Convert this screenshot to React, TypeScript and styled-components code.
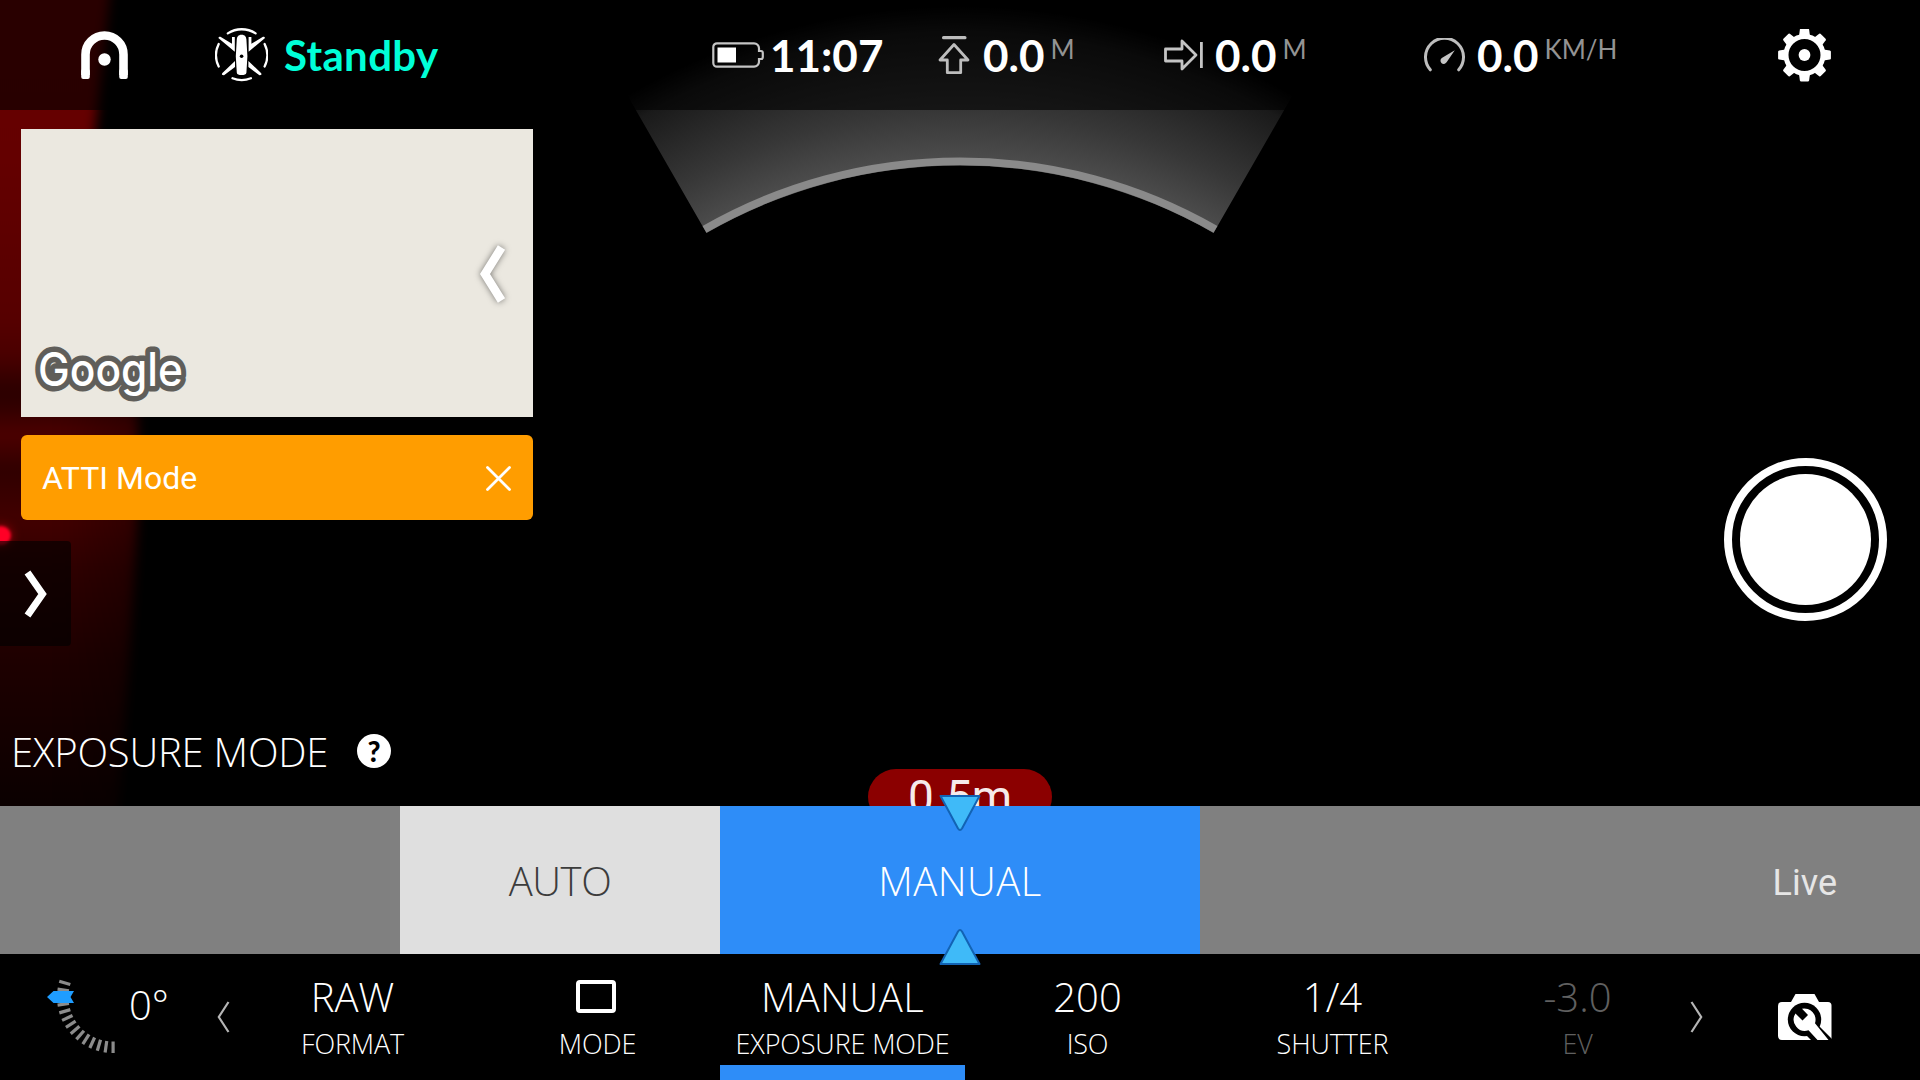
import React from "react";
import styled, { createGlobalStyle, css } from "styled-components";

const GlobalStyle = createGlobalStyle`
  *, *::before, *::after { box-sizing: border-box; }
  html, body { margin: 0; padding: 0; background: #000; }
`;

const LATO = `Lato, "Open Sans", sans-serif`;
const LIGHT = `"Open Sans", "Noto Sans", sans-serif`;
const ROBOTO = `Roboto, "Noto Sans", sans-serif`;

const Screen = styled.div`
  position: relative;
  width: 1920px;
  height: 1080px;
  overflow: hidden;
  background: #000;
  color: #fff;
  display: grid;
  grid-template-rows: 110px 696px 148px 126px;
  white-space: nowrap;
  isolation: isolate;
  svg { display: block; flex: none; }
`;

/* ---------- camera feed ---------- */
const Feed = styled.div`
  position: absolute;
  inset: 0;
  z-index: -1;
  overflow: hidden;
`;

const Glow = styled.div`
  position: absolute;
  left: -40px;
  top: -40px;
  width: 190px;
  height: 960px;
  clip-path: polygon(0 0, 154px 0, 134px 180px, 132px 340px, 178px 455px, 178px 560px, 170px 690px, 158px 860px, 100px 960px, 0 960px);
  background: linear-gradient(
    #680000 0, #640000 200px, #560000 360px, #4a0000 395px, #2c0000 430px,
    #300000 445px, #4c0000 475px, #300000 510px, #420000 560px, #300000 610px,
    #1e0000 700px, #120000 790px, #060000 880px, #030000 960px);
`;

const GlowBlur = styled.div`
  filter: blur(6px);
`;

const GlowFade = styled.div`
  position: absolute;
  left: 60px;
  top: 400px;
  width: 110px;
  height: 440px;
  background: linear-gradient(90deg, transparent, rgba(0, 0, 0, 0.3) 75%);
  filter: blur(8px);
`;

const RedLamp = styled.div`
  position: absolute;
  left: -9px;
  top: 526px;
  width: 20px;
  height: 19px;
  border-radius: 50%;
  background: #ff0026;
  box-shadow: 0 0 8px 2px rgba(180, 0, 10, 0.5);
  filter: blur(1.5px);
`;

const GimbalArc = styled.svg`
  position: absolute;
  inset: 0;
`;

/* ---------- header ---------- */
const Header = styled.header`
  display: flex;
  align-items: center;
  padding-left: 81px;
  background: rgba(0, 0, 0, 0.6);
`;

const Segment = styled.div<{ $w: number }>`
  flex: none;
  width: ${(p) => p.$w}px;
  height: 110px;
  display: flex;
  align-items: center;
`;

const Status = styled.span`
  margin-left: 16px;
  font: 700 42px ${LATO};
  letter-spacing: 0.35px;
  color: #00ffd8;
`;

const Value = styled.span<{ $gap: number }>`
  margin-left: ${(p) => p.$gap}px;
  font: 700 44px ${LATO};
`;

const Unit = styled.span`
  margin-left: 6px;
  padding-bottom: 12px;
  font: 400 26px ${LATO};
  color: #939393;
`;

/* ---------- middle ---------- */
const Middle = styled.main`
  display: flex;
  justify-content: space-between;
`;

const LeftColumn = styled.div`
  display: flex;
  flex-direction: column;
  align-items: flex-start;
  padding-top: 19px;
`;

const MapPanel = styled.div`
  width: 512px;
  height: 288px;
  margin-left: 21px;
  padding: 0 20px 10px 12px;
  background: #ebe8e0;
  display: flex;
  justify-content: space-between;
  align-items: flex-end;
`;

const MapArrow = styled.svg`
  align-self: center;
  margin-top: 11px;
  filter: drop-shadow(0 0 3px rgba(0, 0, 0, 0.5));
`;

const Alert = styled.div`
  width: 512px;
  height: 85px;
  margin: 18px 0 21px 21px;
  padding: 1px 21px 0 21px;
  border-radius: 6px;
  background: #ff9d00;
  display: flex;
  align-items: center;
  justify-content: space-between;
  font: 400 32px ${ROBOTO};
`;

const Drawer = styled.button`
  width: 71px;
  height: 105px;
  padding: 0;
  border: 0;
  border-radius: 0 4px 4px 0;
  background: rgba(0, 0, 0, 0.62);
  display: flex;
  align-items: center;
  justify-content: center;
`;

const SettingTitle = styled.div`
  display: flex;
  align-items: center;
  height: 54px;
  margin-top: 78px;
  padding-left: 11px;
  font: 300 40px ${LIGHT};
  letter-spacing: -0.2px;
`;

const TitleText = styled.span`
  width: 346px;
`;

const Help = styled.span`
  width: 34px;
  height: 34px;
  border-radius: 50%;
  background: #fff;
  color: #000;
  display: flex;
  align-items: center;
  justify-content: center;
  font: 900 28px/34px ${LATO};
`;

const ShutterRing = styled.button`
  width: 163px;
  height: 163px;
  margin: 348px 33px 0 0;
  padding: 8px;
  border: 8px solid #fff;
  border-radius: 50%;
  background: transparent;
`;

const ShutterCore = styled.span`
  display: block;
  width: 131px;
  height: 131px;
  border-radius: 50%;
  background: #fff;
`;

const DistancePill = styled.div`
  position: absolute;
  left: 868px;
  top: 769px;
  width: 184px;
  height: 56px;
  border-radius: 28px;
  background: #8b0000;
  color: #f6eaea;
  text-align: center;
  font: 400 46px/56px ${ROBOTO};
  z-index: -1;
`;

/* ---------- mode strip ---------- */
const Strip = styled.section`
  position: relative;
  display: grid;
  grid-template-columns: 400px 320px 480px 720px;
`;

const stripTone = {
  idle: css`background: #808080; color: #e6e6e6;`,
  option: css`background: #dfdfdf; color: #3c3c3c; letter-spacing: -0.4px;`,
  active: css`background: #2e8df8; color: #fff; letter-spacing: 0.5px;`,
};

const StripCell = styled.div<{ $tone: keyof typeof stripTone }>`
  display: flex;
  align-items: center;
  justify-content: center;
  font: 300 40px ${LIGHT};
  ${(p) => stripTone[p.$tone]}
`;

const LiveLabel = styled.span`
  margin-left: auto;
  padding: 6px 83px 0 0;
  font: 400 36px ${ROBOTO};
`;

const Pointer = styled.svg<{ $top: number; $flip?: boolean }>`
  position: absolute;
  left: 938px;
  top: ${(p) => p.$top}px;
  transform: ${(p) => (p.$flip ? "scaleY(-1)" : "none")};
`;

/* ---------- footer ---------- */
const Footer = styled.footer`
  display: flex;
  background: #000;
`;

const Tilt = styled.div`
  width: 217px;
  padding: 24px 0 0 45px;
  display: flex;
`;

const TiltValue = styled.span`
  margin: -1px 0 0 9px;
  font: 300 40px ${LIGHT};
`;

const Arrow = styled.div`
  width: 13px;
  padding-top: 47px;
`;

const Settings = styled.div`
  display: grid;
  grid-template-columns: repeat(6, 245px);
  width: 1460px;
  height: 126px;
`;

const Setting = styled.div<{ $active?: boolean; $dim?: boolean }>`
  display: flex;
  flex-direction: column;
  align-items: center;
  padding-top: 15px;
  color: ${(p) => (p.$dim ? "#606060" : "#fff")};
  box-shadow: ${(p) => (p.$active ? "inset 0 -15px #2e8df8" : "none")};
  letter-spacing: ${(p) => (p.$active ? "0.4px" : "0")};
`;

const SettingValue = styled.div`
  height: 55px;
  display: flex;
  align-items: center;
  font: 300 40px ${LIGHT};
`;

const SettingLabel = styled.div`
  margin-top: 1px;
  font: 300 27px/37px ${LIGHT};
  letter-spacing: -0.15px;
`;

const FrameIcon = styled.span`
  width: 40px;
  height: 33px;
  margin: 0 3px 1px 0;
  border: 4px solid #fff;
  border-radius: 4px;
`;

const CameraSettings = styled.div`
  margin-left: 75px;
  padding-top: 40px;
`;

/* ---------- drawings ---------- */
const Gimbal = () => (
  <GimbalArc width="1920" height="260" viewBox="0 0 1920 260">
    <defs>
      <radialGradient id="fan" gradientUnits="userSpaceOnUse" cx="960" cy="674" r="690">
        <stop offset="0.746" stopColor="#4c4c4c" />
        <stop offset="0.816" stopColor="#373737" />
        <stop offset="0.93" stopColor="#1a1a1a" />
        <stop offset="0.97" stopColor="#000" />
      </radialGradient>
    </defs>
    <path d="M706.5 233 L571.5 -2 H1348.5 L1213.5 233 A510 510 0 0 0 706.5 233Z" fill="url(#fan)" />
    <path d="M704.5 229.400 A514 514 0 0 1 1215.500 229.400" fill="none" stroke="#8a8a8a" strokeWidth="7.800" />
  </GimbalArc>
);

const Logo = () => (
  <svg width="47" height="48" viewBox="0 0 47 48">
    <path d="M4.5 44V23.5a19 19 0 0 1 38 0V44" fill="none" stroke="#fff" strokeWidth="8.6" />
    <rect x=".2" y="38" width="8.6" height="10" rx="2" fill="#fff" />
    <rect x="38.2" y="38" width="8.6" height="10" rx="2" fill="#fff" />
    <circle cx="23.5" cy="28.5" r="6.2" fill="#fff" />
  </svg>
);

const Drone = () => (
  <svg width="53" height="54" viewBox="215 28 53 54">
    <g fill="none" stroke="#fff" strokeWidth="2.3" strokeLinecap="round">
      <path d="M227.800 33.400a25.300 25.300 0 0 1 27.800 0" />
      <path d="M218.700 44a25.300 25.300 0 0 0 0 22.500" />
      <path d="M264.600 44a25.300 25.300 0 0 1 0 22.500" />
      <path d="M232.500 78.300a25.300 25.300 0 0 0 18.400 0" />
    </g>
    <path fill="#fff" d="M218.600 38.200q-.4-1.800 1.800-1.400l11.600 7V37h2.800v14.800zM264.800 38.200q.4-1.800-1.800-1.400l-11.600 7V37h-2.800v14.800zM235 61v6l-11 8.300q-3.200-.1-1.600-2.300zM248.400 61v6l11 8.300q3.200-.1 1.600-2.300z" />
    <path fill="#fff" d="M241.600 34.800c3.600 0 4.400 2.200 4.800 4.500l1 17-1 16.500c-.4 1.900-2 2.300-4.800 2.300s-4.400-.4-4.800-2.300l-1-16.500 1-17c.4-2.300 1.200-4.500 4.800-4.500z" />
    <circle cx="241.600" cy="56.300" r="1.800" fill="#000" />
  </svg>
);

const Battery = () => (
  <svg width="52" height="26" viewBox="0 0 52 26">
    <path d="M5 1.300h37a5 5 0 0 1 5 5v2.700h2q1.800 0 1.800 1.800v4.400q0 1.800-1.800 1.800h-2v2.700a5 5 0 0 1-5 5H5a3.700 3.700 0 0 1-3.700-3.700V5A3.700 3.700 0 0 1 5 1.300z" fill="none" stroke="#c4c4c4" strokeWidth="2.200" />
    <rect x="5.500" y="5.500" width="18.500" height="15" fill="#fff" />
  </svg>
);

const Altitude = () => (
  <svg width="32" height="40" viewBox="0 0 32 40">
    <rect x="4" y="1" width="24.500" height="3.300" rx="1.500" fill="#bdbdbd" />
    <path d="M16 9.500L30 25H22.700V37.700H9.300V25H2z" fill="none" stroke="#bdbdbd" strokeWidth="2.800" strokeLinejoin="round" />
  </svg>
);

const Distance = () => (
  <svg width="40" height="34" viewBox="0 0 40 34">
    <path d="M1.500 11H18V3L32 17 18 31V23H1.500z" fill="none" stroke="#c4c4c4" strokeWidth="2.800" strokeLinejoin="round" />
    <rect x="36" y="4" width="2.800" height="26" fill="#c4c4c4" />
  </svg>
);

const Speed = () => (
  <svg width="41" height="34" viewBox="0 0 41 34">
    <path d="M6.300 31.800A19 19 0 1 1 34.700 31.800" fill="none" stroke="#bdbdbd" strokeWidth="3" strokeLinecap="round" />
    <path d="M30.800 12.300L22.600 24.300a3.300 3.300 0 1 1-4.400-4.600z" fill="#c4c4c4" />
  </svg>
);

const Gear = () => (
  <svg width="53" height="53" viewBox="-26.500 -26 53 53">
    {[0, 45, 90, 135, 180, 225, 270, 315].map((a) => (
      <path key={a} transform={`rotate(${a})`} d="M-5.500-19L-4.600-25.400Q-4.400-26.400-3.400-26.400H3.400Q4.400-26.400 4.600-25.400L5.500-19z" fill="#fff" />
    ))}
    <circle r="18.500" fill="none" stroke="#fff" strokeWidth="5" />
    <circle r="5.900" fill="#fff" />
  </svg>
);

const GoogleMark = () => (
  <svg width="180" height="66" viewBox="0 0 180 66">
    <text
      x="5" y="45" textLength="145" lengthAdjust="spacingAndGlyphs"
      fontFamily="Inter, Roboto, sans-serif" fontSize="46" fontWeight="500"
      fill="#fff" stroke="#605e5a" strokeWidth="11" strokeLinejoin="round" paintOrder="stroke"
    >
      Google
    </text>
  </svg>
);

const Triangle = (p: { top: number; flip?: boolean }) => (
  <Pointer $top={p.top} $flip={p.flip} width="44" height="38" viewBox="0 0 44 38">
    <path d="M2.500 2H41.500L24 34.500Q22 37.500 20 34.500z" fill="#3fbaf8" stroke="#1263b4" strokeWidth="2" strokeLinejoin="round" />
  </Pointer>
);

const TiltGauge = () => (
  <svg width="75" height="80" viewBox="45 978 75 80">
    {Array.from({ length: 14 }, (_, i) => (
      <rect key={i} x="57" y="995.500" width="11.500" height="3.200" fill="#8c8c8c" transform={`rotate(${(2 - i) * 8.180} 113 997)`} />
    ))}
    <path d="M47 997L53.500 991H74L70.500 997 74 1003H53.500z" fill="#1f9dff" />
  </svg>
);

const CameraWrench = () => (
  <svg width="54" height="47" viewBox="0 0 54 47">
    <path d="M4 8H13L17.500 0H36.500L41 8H50a3.500 3.500 0 0 1 3.500 3.500V46H4a4 4 0 0 1-4-4V12a4 4 0 0 1 4-4z" fill="#fff" />
    <circle cx="26.500" cy="25.500" r="16.700" fill="#000" />
    <path d="M28 41L39 30 54 45V47H34z" fill="#000" />
    <path d="M17.500 19.500l7 7 5.500-5.500-6-6.300a11.300 11.300 0 0 1 13 14.600L50.500 46H39.500L30.500 36.300a11.300 11.300 0 0 1-13-16.800z" fill="#fff" />
  </svg>
);

const settings: { value: React.ReactNode; label: string; active?: boolean; dim?: boolean }[] = [
  { value: "RAW", label: "FORMAT" },
  { value: <FrameIcon />, label: "MODE" },
  { value: "MANUAL", label: "EXPOSURE MODE", active: true },
  { value: "200", label: "ISO" },
  { value: "1/4", label: "SHUTTER" },
  { value: "-3.0", label: "EV", dim: true },
];

export default function App() {
  return (
    <>
      <GlobalStyle />
      <Screen>
        <Feed>
          <GlowBlur><Glow /></GlowBlur>
          <GlowFade />
          <RedLamp />
          <Gimbal />
        </Feed>

        <Header>
          <Segment $w={134}><Logo /></Segment>
          <Segment $w={497}><Drone /><Status>Standby</Status></Segment>
          <Segment $w={226}><Battery /><Value $gap={6}>11:07</Value></Segment>
          <Segment $w={226}><Altitude /><Value $gap={13}>0.0</Value><Unit>M</Unit></Segment>
          <Segment $w={260}><Distance /><Value $gap={11}>0.0</Value><Unit>M</Unit></Segment>
          <Segment $w={354}><Speed /><Value $gap={12}>0.0</Value><Unit>KM/H</Unit></Segment>
          <Segment $w={53}><Gear /></Segment>
        </Header>

        <Middle>
          <LeftColumn>
            <MapPanel>
              <GoogleMark />
              <MapArrow width="40" height="60" viewBox="0 0 40 60">
                <path d="M28.500 3.500L12 30 28.500 56.500" fill="none" stroke="#fff" strokeWidth="8.500" />
              </MapArrow>
            </MapPanel>
            <Alert>
              ATTI Mode
              <svg width="27" height="27" viewBox="0 0 27 27">
                <path d="M2.500 2.500l22 22M24.500 2.500l-22 22" stroke="#fff" strokeWidth="2.800" strokeLinecap="round" />
              </svg>
            </Alert>
            <Drawer>
              <svg width="30" height="50" viewBox="0 0 30 50">
                <path d="M6.500 3.500L21.500 25 6.500 46.500" fill="none" stroke="#fff" strokeWidth="7" />
              </svg>
            </Drawer>
            <SettingTitle><TitleText>EXPOSURE MODE</TitleText><Help>?</Help></SettingTitle>
          </LeftColumn>
          <ShutterRing><ShutterCore /></ShutterRing>
          <DistancePill>0.5m</DistancePill>
        </Middle>

        <Strip>
          <StripCell $tone="idle" />
          <StripCell $tone="option">AUTO</StripCell>
          <StripCell $tone="active">MANUAL</StripCell>
          <StripCell $tone="idle"><LiveLabel>Live</LiveLabel></StripCell>
          <Triangle top={-12} />
          <Triangle top={122} flip />
        </Strip>

        <Footer>
          <Tilt><TiltGauge /><TiltValue>0°</TiltValue></Tilt>
          <Arrow>
            <svg width="13" height="32" viewBox="0 0 13 32">
              <path d="M11.500 1L1.800 16 11.500 31" fill="none" stroke="#b5b5b5" strokeWidth="2.200" />
            </svg>
          </Arrow>
          <Settings>
            {settings.map((s) => (
              <Setting key={s.label} $active={s.active} $dim={s.dim}>
                <SettingValue>{s.value}</SettingValue>
                <SettingLabel>{s.label}</SettingLabel>
              </Setting>
            ))}
          </Settings>
          <Arrow>
            <svg width="13" height="32" viewBox="0 0 13 32">
              <path d="M1.500 1L11.200 16 1.500 31" fill="none" stroke="#b5b5b5" strokeWidth="2.200" />
            </svg>
          </Arrow>
          <CameraSettings><CameraWrench /></CameraSettings>
        </Footer>
      </Screen>
    </>
  );
}
